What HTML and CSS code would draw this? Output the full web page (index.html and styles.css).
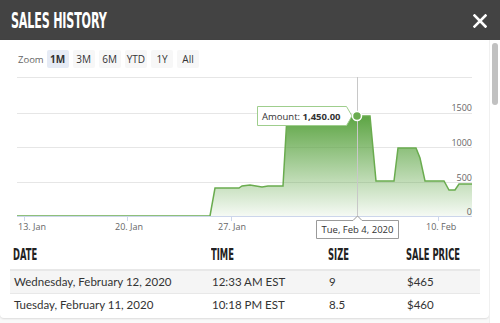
FILE: index.html
```html
<!DOCTYPE html>
<html lang="en">
<head>
    <meta charset="UTF-8">
    <meta name="viewport" content="width=device-width, initial-scale=1.0">
    <title>Sales History</title>
    <link rel="stylesheet" href="styles.css">
</head>
<body>
    <div class="header">
        <h1 class="title">SALES HISTORY</h1>
        <svg class="close" width="14" height="14" viewBox="0 0 14 14">
            <path d="M1.5 1.5 L12.5 12.5 M12.5 1.5 L1.5 12.5" stroke="#fff" stroke-width="2.6" stroke-linecap="square"/>
        </svg>
    </div>
    <div class="main">
        <div class="content">
            <div class="card">
                <div class="zoom">
                    <span class="zoom-label">Zoom</span>
                    <button class="zbtn active">1M</button>
                    <button class="zbtn">3M</button>
                    <button class="zbtn">6M</button>
                    <button class="zbtn">YTD</button>
                    <button class="zbtn">1Y</button>
                    <button class="zbtn">All</button>
                </div>
                <svg class="chart" width="489" height="170" viewBox="0 70 489 170">
                    <defs>
                        <linearGradient id="fill" gradientUnits="userSpaceOnUse" x1="0" y1="116" x2="0" y2="216">
                            <stop offset="0" stop-color="#5da544"/>
                            <stop offset="1" stop-color="#5da544" stop-opacity="0.06"/>
                        </linearGradient>
                    </defs>
                    <g stroke="#e6e6e6" stroke-width="1">
                        <line x1="17" y1="77.5" x2="472" y2="77.5"/>
                        <line x1="17" y1="113.5" x2="472" y2="113.5"/>
                        <line x1="17" y1="147.5" x2="472" y2="147.5"/>
                        <line x1="17" y1="182.5" x2="472" y2="182.5"/>
                    </g>
                    <path d="M17 216 L210 216 L215 188 L239 188 L242 186 L250 185 L256 186 L262 187 L268 186 L283 186 L287 116 L370 116 L376 181 L394 181 L398 148 L416 148 L420 158 L425 181 L444 181 L449 190 L455 190 L459 184 L472 184 L472 216 Z" fill="url(#fill)"/>
                    <path d="M17 216 L210 216 L215 188 L239 188 L242 186 L250 185 L256 186 L262 187 L268 186 L283 186 L287 116 L370 116 L376 181 L394 181 L398 148 L416 148 L420 158 L425 181 L444 181 L449 190 L455 190 L459 184 L472 184" fill="none" stroke="#6aac4f" stroke-width="1.5"/>
                    <line x1="17" y1="216.5" x2="472" y2="216.5" stroke="#ccd6eb"/>
                    <g stroke="#ccd6eb">
                        <line x1="24.5" y1="216" x2="24.5" y2="221"/>
                        <line x1="127.5" y1="216" x2="127.5" y2="221"/>
                        <line x1="231.5" y1="216" x2="231.5" y2="221"/>
                        <line x1="438.5" y1="216" x2="438.5" y2="221"/>
                    </g>
                    <line x1="357.5" y1="77" x2="357.5" y2="216" stroke="#c8c8c8"/>
                    <g class="axis">
                        <text x="18" y="230">13. Jan</text>
                        <text x="115" y="230">20. Jan</text>
                        <text x="218" y="230">27. Jan</text>
                        <text x="426" y="230">10. Feb</text>
                        <text x="472" y="111" text-anchor="end">1500</text>
                        <text x="472" y="146" text-anchor="end">1000</text>
                        <text x="472" y="181" text-anchor="end">500</text>
                        <text x="472" y="215" text-anchor="end">0</text>
                    </g>
                    <path d="M257.5 106.5 H346.5 L352 116 L346.5 125.5 H257.5 Z" fill="#fff" stroke="#9fce8d" stroke-width="1" stroke-linejoin="round"/>
                    <text class="tip" x="262" y="119.5">Amount: <tspan font-weight="bold">1,450.00</tspan></text>
                    <circle cx="357" cy="116" r="4.5" fill="#6aac4f" stroke="#fff" stroke-width="1.5"/>
                    <path d="M316.5 220.5 H353 L357.5 216 L362 220.5 H398.5 V238.5 H316.5 Z" fill="#fff" stroke="#9a9a9a" stroke-width="1" stroke-linejoin="round"/>
                    <text class="tip" x="357.5" y="232.5" text-anchor="middle">Tue, Feb 4, 2020</text>
                </svg>
                <table class="sales">
                    <thead>
                        <tr>
                            <th class="c-date"><span>DATE</span></th>
                            <th class="c-time"><span>TIME</span></th>
                            <th class="c-size"><span>SIZE</span></th>
                            <th><span>SALE PRICE</span></th>
                        </tr>
                    </thead>
                    <tbody>
                        <tr class="odd">
                            <td>Wednesday, February 12, 2020</td>
                            <td>12:33 AM EST</td>
                            <td>9</td>
                            <td>$465</td>
                        </tr>
                        <tr>
                            <td>Tuesday, February 11, 2020</td>
                            <td>10:18 PM EST</td>
                            <td>8.5</td>
                            <td>$460</td>
                        </tr>
                    </tbody>
                </table>
            </div>
        </div>
        <div class="scrollbar">
            <div class="thumb"></div>
        </div>
    </div>
</body>
</html>
```

FILE: styles.css
```css
* {
    box-sizing: border-box;
}
body {
    margin: 0;
    width: 500px;
    height: 323px;
    overflow: hidden;
    font-family: Lato, "Open Sans", sans-serif;
    background: #fff;
    color: #333;
}
.header {
    height: 40px;
    background: #434343;
    display: flex;
    align-items: center;
    justify-content: space-between;
    padding: 0 13px 0 11px;
}
.title {
    margin: 0;
    color: #fff;
    font-family: "DejaVu Sans Condensed", "DejaVu Sans", sans-serif;
    font-stretch: condensed;
    font-weight: bold;
    font-size: 21px;
    letter-spacing: -0.3px;
    transform: scaleX(0.59);
    transform-origin: left center;
    white-space: nowrap;
    margin-top: 1px;
}
.close {
    display: block;
    margin-top: 1px;
}
.main {
    display: flex;
    height: 283px;
}
.content {
    flex: 1;
    background: #f9f9f9;
    padding-bottom: 5px;
}
.card {
    width: 489px;
    height: 278px;
    background: #fff;
    border-radius: 0 0 4px 4px;
    box-shadow: 0 1px 2px rgba(0, 0, 0, 0.12);
    padding-top: 10px;
}
.zoom {
    display: flex;
    align-items: center;
    gap: 4px;
    margin-left: 18px;
    height: 18px;
    font-family: "Open Sans", sans-serif;
    font-size: 10px;
}
.zoom-label {
    color: #666;
    font-size: 9.5px;
    margin-right: -1px;
}
.zbtn {
    height: 18px;
    padding: 0 2px;
    min-width: 22px;
    border: none;
    border-radius: 2px;
    background: #f7f7f7;
    color: #333;
    font-family: "Open Sans", sans-serif;
    font-size: 10px;
}
.zbtn.active {
    background: #e6ebf5;
    font-weight: bold;
}
.chart {
    display: block;
    margin-top: 2px;
}
.axis text {
    font-family: "Open Sans", sans-serif;
    font-size: 9px;
    fill: #666;
}
.tip {
    font-family: "Open Sans", sans-serif;
    font-size: 9.5px;
    fill: #333;
}
.sales {
    width: 470px;
    margin: 0 0 0 10px;
    border-collapse: collapse;
    table-layout: fixed;
}
.sales th {
    text-align: left;
    font-family: "DejaVu Sans Condensed", "DejaVu Sans", sans-serif;
    font-stretch: condensed;
    font-weight: bold;
    font-size: 15px;
    color: #222;
    height: 30px;
    padding: 0 0 0 3px;
    border-bottom: 2px solid #e8e8e8;
    white-space: nowrap;
}
.sales th span {
    display: inline-block;
    transform: scaleX(0.62);
    transform-origin: left center;
}
.sales td {
    font-size: 11.5px;
    height: 23px;
    padding: 0 0 0 4px;
    color: #333;
    white-space: nowrap;
}
.sales tr.odd td {
    background: #f5f5f5;
    border-bottom: 1px solid #e8e8e8;
}
.c-date {
    width: 198px;
}
.c-time {
    width: 117px;
}
.c-size {
    width: 78px;
}
.scrollbar {
    width: 11px;
    background: #fff;
    border-left: 1px solid #f0f0f0;
    padding: 3px 2px 0 2px;
}
.thumb {
    height: 62px;
    background: #c1c1c1;
    border-radius: 4px;
}
```
